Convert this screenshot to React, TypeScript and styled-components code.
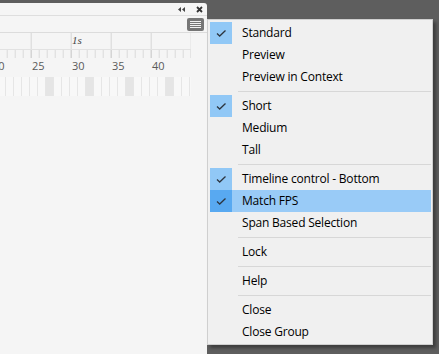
import React from "react";
import styled, { createGlobalStyle } from "styled-components";

const GlobalStyle = createGlobalStyle`
	html, body {
		margin: 0;
		height: 100%;
		overflow: hidden;
		background: #5e5e5e;
	}
	#root {
		height: 100%;
	}
`;

const Screen = styled.div`
	position: relative;
	height: 100%;
	padding-top: 3px;
	box-sizing: border-box;
	font-family: "Open Sans", "Noto Sans", sans-serif;
`;

const Panel = styled.div`
	width: 207px;
	height: 100%;
	background: #f5f5f5;
	border-top-right-radius: 3px;
	display: flex;
	flex-direction: column;
`;

const TitleBar = styled.div`
	height: 12px;
	border-bottom: 1px solid #dedede;
	display: flex;
	align-items: center;
	justify-content: flex-end;
	gap: 11px;
	padding-right: 4px;
`;

const Toolbar = styled.div`
	height: 16px;
	border-bottom: 1px solid #dcdcdc;
	display: flex;
	align-items: flex-start;
	justify-content: flex-end;
	padding-right: 3px;
`;

const MenuButton = styled.div`
	width: 17px;
	height: 13px;
	margin-top: 2px;
	border-radius: 2px;
	background: #767676;
	display: flex;
	flex-direction: column;
	justify-content: center;
	align-items: center;
	gap: 1px;

	> span {
		width: 11px;
		height: 1px;
		background: #f2f2f2;
	}
`;

const Ruler = styled.div`
	width: 191px;
	display: flex;
	flex-direction: column;
`;

const FRAME = 8;
const OFFSET = 6.7;
const MAJOR = FRAME * 5;

// one line every 5 frames, first one at frame 25
const majorLines = (color: string) => `
	background-image: linear-gradient(to right, ${color} 0 1px, transparent 1px);
	background-size: ${MAJOR}px 100%;
	background-position: ${OFFSET + 3 * FRAME}px 0;
`;

const SecondsRow = styled.div`
	position: relative;
	height: 16px;
	border-bottom: 1px solid #e2e2e2;
	${majorLines("#d6d6d6")}
`;

const TickRow = styled.div`
	height: 8px;
	background-image: linear-gradient(to right, #dadada 0 1px, transparent 1px);
	background-size: ${FRAME}px 100%;
	background-position: ${OFFSET}px 0;
`;

const MajorTicks = styled.div`
	height: 100%;
	${majorLines("#cfcfcf")}
`;

const NumberRow = styled.div`
	position: relative;
	height: 18px;
`;

const Label = styled.span<{ $italic?: boolean }>`
	position: absolute;
	top: ${(p) => (p.$italic ? "1px" : "2px")};
	font-size: 11px;
	line-height: 12px;
	color: ${(p) => (p.$italic ? "#444" : "#5a5a5a")};
	font-style: ${(p) => (p.$italic ? "italic" : "normal")};
	font-family: ${(p) => (p.$italic ? '"Liberation Serif", serif' : '"Open Sans", sans-serif')};
`;

const FrameRow = styled.div`
	height: 19px;
	display: flex;
	margin-top: 1px;
	overflow: hidden;
`;

const FrameCell = styled.div<{ $key: boolean }>`
	flex: 0 0 ${FRAME}px;
	box-sizing: border-box;
	border-right: 1px solid #e6e6e6;
	background: ${(p) => (p.$key ? "#e5e5e5" : "#f8f8f8")};
`;

const Menu = styled.div`
	position: absolute;
	left: 207px;
	top: 19px;
	width: 226px;
	height: 326px;
	box-sizing: border-box;
	padding: 2px 1px 1px 2px;
	background: #f0f0f0;
	border: 1px solid #cfcfcf;
	box-shadow: 3px 3px 3px rgba(0, 0, 0, 0.35);
	display: flex;
	flex-direction: column;
`;

const Item = styled.div<{ $active?: boolean }>`
	height: 22px;
	display: flex;
	align-items: center;
	gap: 10px;
	background: ${(p) => (p.$active ? "#99cbf7" : "transparent")};
	font-size: 12px;
	letter-spacing: -0.2px;
	color: #000;

	> span {
		padding-bottom: 2px;
	}
`;

const CheckBox = styled.div<{ $checked?: boolean; $active?: boolean }>`
	width: 22px;
	height: 22px;
	flex: none;
	display: flex;
	align-items: center;
	justify-content: center;
	background: ${(p) => (!p.$checked ? "transparent" : p.$active ? "#58a9f1" : "#91c8f6")};
`;

const Separator = styled.div`
	height: 1px;
	margin: 3px 0 3px 28px;
	background: #d7d7d7;
`;

const Check = () => (
	<svg width="22" height="22" viewBox="0 0 22 22">
		<path d="M7 11.5 L9.7 14 L15.5 8.5" fill="none" stroke="#2d3640" strokeWidth="1.3" />
	</svg>
);

type Entry = { label: string; checked?: boolean; active?: boolean } | "sep";

const entries: Entry[] = [
	{ label: "Standard", checked: true },
	{ label: "Preview" },
	{ label: "Preview in Context" },
	"sep",
	{ label: "Short", checked: true },
	{ label: "Medium" },
	{ label: "Tall" },
	"sep",
	{ label: "Timeline control - Bottom", checked: true },
	{ label: "Match FPS", checked: true, active: true },
	{ label: "Span Based Selection" },
	"sep",
	{ label: "Lock" },
	"sep",
	{ label: "Help" },
	"sep",
	{ label: "Close" },
	{ label: "Close Group" },
];

const frames = Array.from({ length: 24 }, (_, i) => i + 20);

export default function App() {
	return (
		<>
			<GlobalStyle />
			<Screen>
				<Panel>
					<TitleBar>
						<svg width="7" height="5" viewBox="0 0 7 5">
							<path d="M3 0 L0 2.5 L3 5 Z M7 0 L4 2.5 L7 5 Z" fill="#444" />
						</svg>
						<svg width="7" height="7" viewBox="0 0 7 7">
							<path d="M1 1 L6 6 M6 1 L1 6" stroke="#333" strokeWidth="1.8" />
						</svg>
					</TitleBar>
					<Toolbar>
						<MenuButton>
							<span />
							<span />
							<span />
							<span />
						</MenuButton>
					</Toolbar>
					<Ruler>
						<SecondsRow>
							<Label $italic style={{ left: 72 }}>1s</Label>
						</SecondsRow>
						<TickRow>
							<MajorTicks />
						</TickRow>
						<NumberRow>
							{[20, 25, 30, 35, 40].map((n, i) => (
								<Label key={n} style={{ left: -8 + i * MAJOR }}>
									{n}
								</Label>
							))}
						</NumberRow>
						<FrameRow>
							<FrameCell $key={false} style={{ flexBasis: OFFSET - 1 }} />
							{frames.map((f) => (
								<FrameCell key={f} $key={f % 5 === 0 && f > 20} />
							))}
						</FrameRow>
					</Ruler>
				</Panel>

				<Menu>
					{entries.map((e, i) =>
						e === "sep" ? (
							<Separator key={i} />
						) : (
							<Item key={i} $active={e.active}>
								<CheckBox $checked={e.checked} $active={e.active}>
									{e.checked && <Check />}
								</CheckBox>
								<span>{e.label}</span>
							</Item>
						)
					)}
				</Menu>
			</Screen>
		</>
	);
}
